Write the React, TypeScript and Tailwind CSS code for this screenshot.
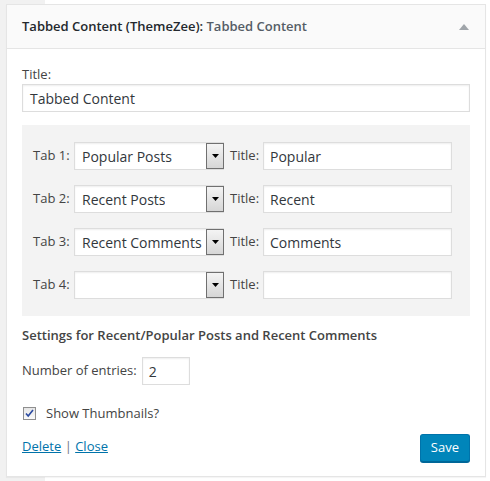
import React from 'react';

const tabs = [
  { n: 1, type: 'Popular Posts', title: 'Popular' },
  { n: 2, type: 'Recent Posts', title: 'Recent' },
  { n: 3, type: 'Recent Comments', title: 'Comments' },
  { n: 4, type: '', title: '' },
];

const inputCls =
  'h-[28px] border border-[#ddd] bg-white shadow-[inset_0_1px_2px_rgba(0,0,0,0.07)] text-[14px] text-[#32373c] flex items-center';

const Select: React.FC<{ value: string }> = ({ value }) => (
  <div className={`${inputCls} w-[150px] pl-[7px] pr-0 justify-between`}>
    <span className="whitespace-nowrap overflow-hidden">{value}</span>
    <span className="w-[18px] h-[26px] mr-[-1px] border border-[#707070] bg-[linear-gradient(#f4f4f4,#d6d6d6)] flex items-center justify-center shrink-0">
      <svg width="7" height="4" viewBox="0 0 7 4">
        <path d="M0 0h7L3.5 4z" fill="#000" />
      </svg>
    </span>
  </div>
);

export default function App() {
  return (
    <div className="w-[490px] h-[481px] pt-[4px] pl-[6px] bg-[linear-gradient(to_right,#f1f1f1_45px,#fff_45px)] font-['Open_Sans','Liberation_Sans',sans-serif] text-[13px] text-[#444]">
      <div className="w-[480px] border border-[#e5e5e5] bg-white shadow-[0_1px_1px_rgba(0,0,0,0.04)]">
        <div className="h-[44px] bg-[#fafafa] border-b border-[#e5e5e5] flex items-center justify-between pl-[15px] pr-[16px]">
          <h3 className="text-[13px] font-semibold text-[#23282d] leading-none">
            Tabbed Content (ThemeZee): <span className="text-[#555d66]">Tabbed Content</span>
          </h3>
          <svg width="10" height="6" viewBox="0 0 10 6">
            <path d="M0 6h10L5 0z" fill="#a0a5aa" />
          </svg>
        </div>

        <div className="px-[15px] pt-[16px] pb-[14px]">
          <label className="block leading-[18px]">Title:</label>
          <div className={`${inputCls} mt-[1px] w-full px-[7px]`}>Tabbed Content</div>

          <div className="mt-[13px] bg-[#f3f3f3] pt-[17px] pb-[17px] pl-[11px] pr-[18px] flex flex-col gap-[15px]">
            {tabs.map(t => (
              <div key={t.n} className="flex items-center">
                <span className="w-[41px] whitespace-nowrap">Tab {t.n}:</span>
                <Select value={t.type} />
                <span className="ml-[6px] w-[33px]">Title:</span>
                <div className={`${inputCls} flex-1 px-[6px]`}>{t.title}</div>
              </div>
            ))}
          </div>

          <h4 className="mt-[10px] font-semibold leading-[18px]">
            Settings for Recent/Popular Posts and Recent Comments
          </h4>

          <div className="mt-[13px] flex items-center">
            <span className="whitespace-nowrap">Number of entries:</span>
            <div className={`${inputCls} ml-[5px] w-[48px] px-[6px]`}>2</div>
          </div>

          <div className="mt-[19px] flex items-center">
            <span className="w-[13px] h-[13px] ml-[1px] border border-[#8f8f8f] bg-[linear-gradient(#e6e6e6,#fafafa)] flex items-center justify-center">
              <svg width="9" height="9" viewBox="0 0 9 9">
                <path d="M1 4.5l2.2 2.6L8 1" stroke="#2b4aa0" strokeWidth="1.6" fill="none" />
              </svg>
            </span>
            <span className="ml-[10px]">Show Thumbnails?</span>
          </div>

          <div className="mt-[10px] flex items-start justify-between">
            <div className="mt-[3px] leading-[18px]">
              <a href="#" className="text-[#0073aa] underline">Delete</a>
              <span className="text-[#72777c]"> | </span>
              <a href="#" className="text-[#0073aa] underline">Close</a>
            </div>
            <button className="h-[28px] px-[10px] rounded-[3px] bg-[#0085ba] border border-[#0073aa] border-b-[#006799] shadow-[0_1px_0_#006799] text-white text-[13px] leading-none">
              Save
            </button>
          </div>
        </div>
      </div>
    </div>
  );
}
